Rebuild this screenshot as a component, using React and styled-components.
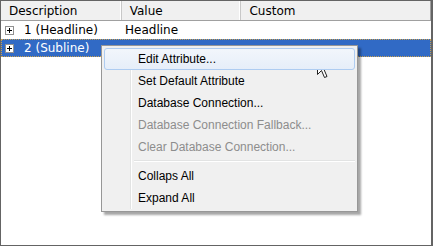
import React from "react";
import styled, { createGlobalStyle } from "styled-components";

const Global = createGlobalStyle`
  html, body { margin: 0; padding: 0; background: #fff; }
  body { width: 433px; height: 246px; overflow: hidden; }
`;

const columns = [
  { title: "Description", width: 121 },
  { title: "Value", width: 120 },
  { title: "Custom", width: 189 },
];

const rows = [
  { label: "1 (Headline)", value: "Headline" },
  { label: "2 (Subline)", value: "", selected: true },
];

const menuItems = [
  { label: "Edit Attribute...", hover: true },
  { label: "Set Default Attribute" },
  { label: "Database Connection..." },
  { label: "Database Connection Fallback...", disabled: true },
  { label: "Clear Database Connection...", disabled: true },
  { separator: true },
  { label: "Collaps All" },
  { label: "Expand All" },
];

const Frame = styled.div`
  position: relative;
  width: 433px;
  height: 246px;
  box-sizing: border-box;
  border: 1px solid #646464;
  border-right-width: 2px;
  font-family: Tahoma, "DejaVu Sans", sans-serif;
  font-size: 12px;
  color: #000;
  background: #fff;
`;

const Header = styled.div`
  display: flex;
  height: 20px;
  background: #f0f0f0;
  border-bottom: 1px solid #a0a0a0;
  border-right: 1px solid #a0a0a0;
  box-sizing: border-box;
`;

const HeaderCell = styled.div`
  width: ${(p) => p.$w}px;
  box-sizing: border-box;
  padding: 3px 0 0 8px;
  border-right: 1px solid #c8c8c8;
  box-shadow: inset -1px 0 0 #fff;
  &:last-child { border-right: none; box-shadow: none; }
`;

const Row = styled.div`
  display: flex;
  align-items: center;
  height: 18px;
  box-sizing: border-box;
  background: ${(p) => (p.$selected ? "#316ac5" : "transparent")};
  color: ${(p) => (p.$selected ? "#fff" : "#000")};
  outline: ${(p) => (p.$selected ? "1px dotted #c8a050" : "none")};
  outline-offset: -1px;
  width: 430px;
`;

const Cell = styled.div`
  width: ${(p) => p.$w}px;
  display: flex;
  align-items: center;
  gap: 10px;
  padding-left: ${(p) => p.$pad}px;
  box-sizing: border-box;
  white-space: nowrap;
`;

const Expander = styled.span`
  position: relative;
  width: 9px;
  height: 9px;
  box-sizing: border-box;
  border: 1px solid #919191;
  background: #fff;
  flex: none;
  &::before, &::after {
    content: "";
    position: absolute;
    background: #000;
  }
  &::before { left: 1px; top: 3px; width: 5px; height: 1px; }
  &::after { left: 3px; top: 1px; width: 1px; height: 5px; }
`;

const Menu = styled.div`
  position: absolute;
  left: 100px;
  top: 44px;
  width: 257px;
  box-sizing: border-box;
  padding: 2px;
  background: #f0f0f0;
  border: 1px solid #979797;
  box-shadow: 3px 3px 2px rgba(0, 0, 0, 0.35);
  font-family: "Segoe UI", "Liberation Sans", sans-serif;
  font-size: 12px;
  &::before {
    content: "";
    position: absolute;
    left: 28px;
    top: 2px;
    bottom: 2px;
    width: 1px;
    background: #e2e3e3;
    box-shadow: 1px 0 0 #fff;
  }
`;

const Item = styled.div`
  position: relative;
  height: 22px;
  padding-left: 33px;
  box-sizing: border-box;
  color: ${(p) => (p.$disabled ? "#8d8d8d" : "#000")};
  border: 1px solid ${(p) => (p.$hover ? "#aeccf1" : "transparent")};
  border-radius: 3px;
  background: ${(p) =>
    p.$hover ? "linear-gradient(#f2f6fb, #e6eef9)" : "transparent"};
  line-height: 20px;
  z-index: 1;
`;

const Separator = styled.div`
  height: 1px;
  margin: 2px 0 3px 30px;
  background: #e2e3e3;
  border-bottom: 1px solid #fff;
`;

const Cursor = () => (
  <svg
    width="14"
    height="22"
    viewBox="0 0 14 22"
    style={{ position: "absolute", left: 316, top: 57 }}
  >
    <path
      d="M0.5 0.5 L0.5 16.5 L4.5 12.5 L7.5 19.5 L10 18.5 L7 11.5 L12.5 11.5 Z"
      fill="#fff"
      stroke="#202020"
      strokeWidth="1"
    />
  </svg>
);

export default function App() {
  return (
    <>
      <Global />
      <Frame>
        <Header>
          {columns.map((c) => (
            <HeaderCell key={c.title} $w={c.width}>
              {c.title}
            </HeaderCell>
          ))}
        </Header>
        {rows.map((r) => (
          <Row key={r.label} $selected={r.selected}>
            <Cell $w={121} $pad={4}>
              <Expander />
              {r.label}
            </Cell>
            <Cell $w={120} $pad={3}>
              {r.value}
            </Cell>
          </Row>
        ))}
        <Menu>
          {menuItems.map((m, i) =>
            m.separator ? (
              <Separator key={i} />
            ) : (
              <Item key={i} $hover={m.hover} $disabled={m.disabled}>
                {m.label}
              </Item>
            )
          )}
        </Menu>
        <Cursor />
      </Frame>
    </>
  );
}
